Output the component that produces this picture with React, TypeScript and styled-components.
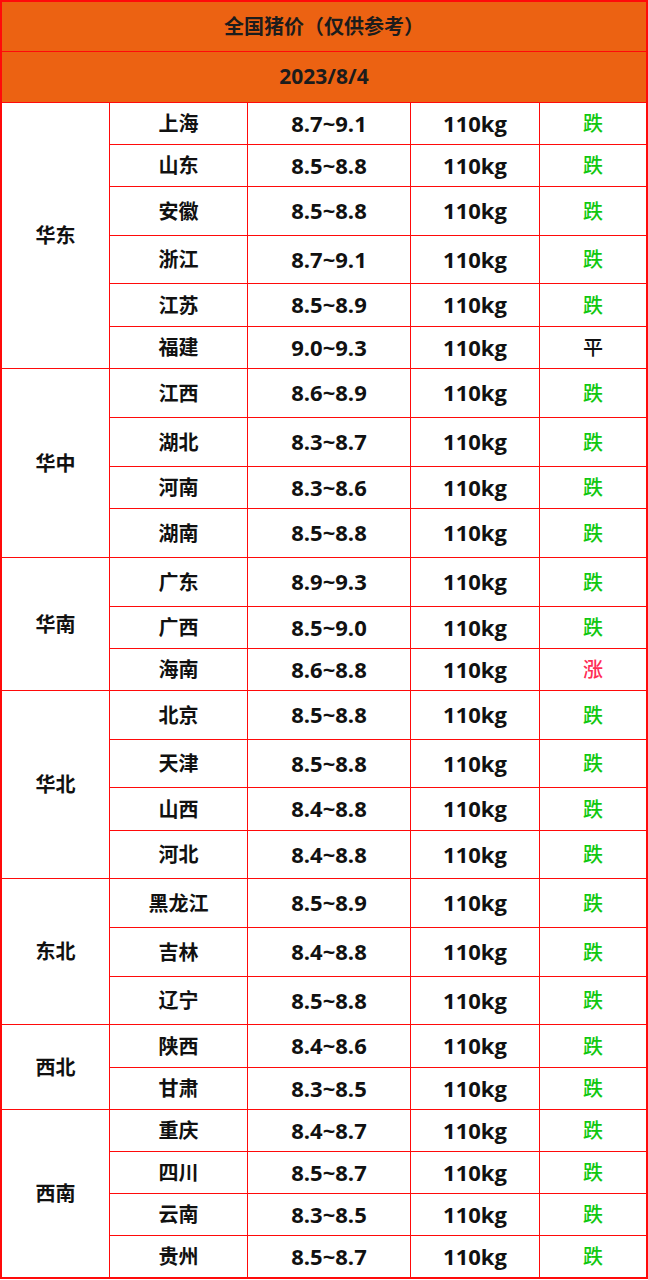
import React from 'react'
import styled, { createGlobalStyle } from 'styled-components'

type Row = [string, string, string]
type Region = { name: string; rows: Row[]; heights: number[] }

const regions: Region[] = [
    {
        name: '华东',
        rows: [
            ['上海', '8.7~9.1', '跌'],
            ['山东', '8.5~8.8', '跌'],
            ['安徽', '8.5~8.8', '跌'],
            ['浙江', '8.7~9.1', '跌'],
            ['江苏', '8.5~8.9', '跌'],
            ['福建', '9.0~9.3', '平'],
        ],
        heights: [41, 41, 48, 47, 42, 41],
    },
    {
        name: '华中',
        rows: [
            ['江西', '8.6~8.9', '跌'],
            ['湖北', '8.3~8.7', '跌'],
            ['河南', '8.3~8.6', '跌'],
            ['湖南', '8.5~8.8', '跌'],
        ],
        heights: [48, 48, 41, 48],
    },
    {
        name: '华南',
        rows: [
            ['广东', '8.9~9.3', '跌'],
            ['广西', '8.5~9.0', '跌'],
            ['海南', '8.6~8.8', '涨'],
        ],
        heights: [48, 41, 41],
    },
    {
        name: '华北',
        rows: [
            ['北京', '8.5~8.8', '跌'],
            ['天津', '8.5~8.8', '跌'],
            ['山西', '8.4~8.8', '跌'],
            ['河北', '8.4~8.8', '跌'],
        ],
        heights: [48, 47, 42, 47],
    },
    {
        name: '东北',
        rows: [
            ['黑龙江', '8.5~8.9', '跌'],
            ['吉林', '8.4~8.8', '跌'],
            ['辽宁', '8.5~8.8', '跌'],
        ],
        heights: [48, 48, 47],
    },
    {
        name: '西北',
        rows: [
            ['陕西', '8.4~8.6', '跌'],
            ['甘肃', '8.3~8.5', '跌'],
        ],
        heights: [42, 41],
    },
    {
        name: '西南',
        rows: [
            ['重庆', '8.4~8.7', '跌'],
            ['四川', '8.5~8.7', '跌'],
            ['云南', '8.3~8.5', '跌'],
            ['贵州', '8.5~8.7', '跌'],
        ],
        heights: [41, 41, 41, 41],
    },
]

const GlobalStyle = createGlobalStyle`
    html, body {
        margin: 0;
        padding: 0;
        background: #ffffff;
    }
    body {
        font-family: "Open Sans", "Noto Sans CJK SC", sans-serif;
        color: #111111;
    }
`

const Table = styled.div<{ $rows: string }>`
    display: grid;
    width: 648px;
    box-sizing: border-box;
    grid-template-columns: 107px 137px 162px 128px 106px;
    grid-template-rows: ${(p) => p.$rows};
    gap: 1px;
    padding: 2px;
    background: #ff0a0a;
`

const HeadCell = styled.div<{ $size: number }>`
    grid-column: 1 / -1;
    background: #ec6212;
    display: flex;
    align-items: center;
    justify-content: center;
    font-size: ${(p) => p.$size}px;
    font-weight: 700;
    color: #1c1c1c;
    padding-bottom: 2px;
    box-sizing: border-box;
`

const Cell = styled.div`
    background: #ffffff;
    display: flex;
    align-items: center;
    justify-content: center;
    font-size: 20px;
    font-weight: 700;
    padding-bottom: 2px;
    box-sizing: border-box;
`

const RegionCell = styled(Cell)<{ $span: number }>`
    grid-column: 1;
    grid-row: span ${(p) => p.$span};
`

const ProvinceCell = styled(Cell)`
    grid-column: 2;
`

const NumCell = styled(Cell)`
    font-size: 22px;
`

const Trend = styled(Cell)<{ $kind: string }>`
    font-weight: 500;
    color: ${(p) => (p.$kind === '跌' ? '#10c810' : p.$kind === '涨' ? '#ff2d55' : '#111111')};
`

const App: React.FC = () => {
    const heights = regions.flatMap((r) => r.heights)
    const rows = ['49px', '50px', ...heights.map((h) => `${h}px`)].join(' ')
    return (
        <>
            <GlobalStyle />
            <Table $rows={rows}>
                <HeadCell $size={20}>全国猪价（仅供参考）</HeadCell>
                <HeadCell $size={21}>2023/8/4</HeadCell>
                {regions.map((region) => (
                    <React.Fragment key={region.name}>
                        <RegionCell $span={region.rows.length}>{region.name}</RegionCell>
                        {region.rows.map(([prov, range, trend]) => (
                            <React.Fragment key={prov}>
                                <ProvinceCell>{prov}</ProvinceCell>
                                <NumCell>{range}</NumCell>
                                <NumCell>110kg</NumCell>
                                <Trend $kind={trend}>{trend}</Trend>
                            </React.Fragment>
                        ))}
                    </React.Fragment>
                ))}
            </Table>
        </>
    )
}

export default App
